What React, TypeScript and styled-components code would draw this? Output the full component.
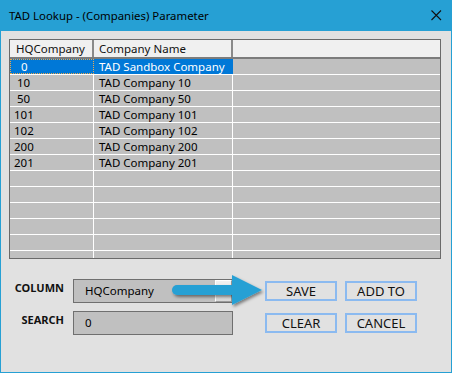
import React from "react";
import styled, { createGlobalStyle } from "styled-components";

const GlobalStyle = createGlobalStyle`
  body {
    margin: 0;
    background: #ffffff;
  }
`;

const Window = styled.div`
  width: 452px;
  height: 373px;
  box-sizing: border-box;
  background: #26a0d4;
  padding: 0 1px 1px 1px;
  display: flex;
  flex-direction: column;
  font-family: "Noto Sans", "DejaVu Sans", sans-serif;
  color: #000;
`;

const TitleBar = styled.div`
  height: 31px;
  flex: none;
  display: flex;
  align-items: center;
  justify-content: space-between;
  padding: 0 9px 0 8px;
  font-size: 11.4px;
`;

const Body = styled.div`
  flex: 1;
  background: #e1e1e1;
  padding: 8px 10px 0 0;
  display: flex;
  flex-direction: column;
`;

const Table = styled.div`
  margin-left: 8px;
  height: 220px;
  box-sizing: border-box;
  border: 1px solid #6a6a6a;
  background: #c0c0c0;
  overflow: hidden;
  font-size: 11.5px;
`;

const HeaderRow = styled.div`
  display: grid;
  grid-template-columns: 84px 139px 1fr;
  height: 19px;
  box-sizing: border-box;
  border-bottom: 2px solid #7c7c7c;
`;

const HeaderCell = styled.div<{ $indent: number }>`
  background: #f0f0f0;
  border-right: 2px solid #8a8a8a;
  padding-left: ${(p) => p.$indent}px;
  line-height: 17px;
  white-space: nowrap;
  color: #111;

  &:last-child {
    border-right: none;
  }
`;

const Row = styled.div`
  display: grid;
  grid-template-columns: 84px 139px 1fr;
  height: 16px;
  box-sizing: border-box;
  border-bottom: 1px solid #ffffff;
`;

const Cell = styled.div<{ $indent?: number; $selected?: boolean; $focus?: boolean }>`
  border-right: 1px solid ${(p) => (p.$selected ? "#0078d7" : "#ffffff")};
  background: ${(p) => (p.$selected ? "#0078d7" : "transparent")};
  color: ${(p) => (p.$selected ? "#ffffff" : "#000")};
  padding-left: ${(p) => p.$indent ?? 5}px;
  line-height: 15px;
  white-space: nowrap;
  overflow: hidden;
  outline: ${(p) => (p.$focus ? "1px dotted #f0a848" : "none")};
  outline-offset: -1px;

  &:last-child {
    border-right: none;
  }
`;

const Controls = styled.div`
  position: relative;
  margin-top: 20px;
  padding-left: 2px;
  display: flex;
  align-items: flex-start;
`;

const Fields = styled.div`
  display: grid;
  grid-template-columns: 61px 160px;
  grid-auto-rows: 24px;
  column-gap: 9px;
  row-gap: 8px;
`;

const Label = styled.div`
  align-self: start;
  text-align: right;
  font-weight: 700;
  font-size: 11px;
  line-height: 17px;
  color: #111;
`;

const Field = styled.div`
  display: flex;
  align-items: stretch;
  box-sizing: border-box;
  border: 1px solid #6f6f6f;
  background: #c0c0c0;
  font-size: 11.5px;
`;

const FieldText = styled.div`
  flex: 1;
  padding-left: 11px;
  line-height: 22px;
`;

const DropButton = styled.div`
  width: 17px;
  box-sizing: border-box;
  border: 1px solid #9a9a9a;
  border-top-color: #ffffff;
  border-left-color: #ffffff;
  background: linear-gradient(#f2f2f2, #d8d8d8);
`;

const Buttons = styled.div`
  margin-left: 32px;
  padding-top: 2px;
  display: grid;
  grid-template-columns: 72px 72px;
  grid-auto-rows: 20px;
  column-gap: 8px;
  row-gap: 12px;
`;

const Button = styled.button`
  box-sizing: border-box;
  border: 2px solid #8bbaf0;
  background: #e1e1e1;
  font-family: "Noto Sans", "DejaVu Sans", sans-serif;
  font-size: 13px;
  line-height: 16px;
  padding: 0;
  color: #111;
`;

const Pointer = styled.svg`
  position: absolute;
  left: 159px;
  top: -11px;
  width: 110px;
  height: 45px;
  overflow: visible;
`;

const rows = [
  { id: "0", indent: 11, name: "TAD Sandbox Company" },
  { id: "10", indent: 7, name: "TAD Company 10" },
  { id: "50", indent: 7, name: "TAD Company 50" },
  { id: "101", indent: 4, name: "TAD Company 101" },
  { id: "102", indent: 4, name: "TAD Company 102" },
  { id: "200", indent: 4, name: "TAD Company 200" },
  { id: "201", indent: 4, name: "TAD Company 201" },
];

const App: React.FunctionComponent = () => {
  const blanks = Array.from({ length: 6 }, (_, i) => i);

  return (
    <Window>
      <GlobalStyle />
      <TitleBar>
        <span>TAD Lookup - (Companies) Parameter</span>
        <svg width="11" height="11" viewBox="0 0 11 11">
          <path d="M0.5 0.5 L10 10 M10 0.5 L0.5 10" stroke="#111" strokeWidth="1.1" />
        </svg>
      </TitleBar>
      <Body>
        <Table>
          <HeaderRow>
            <HeaderCell $indent={6}>HQCompany</HeaderCell>
            <HeaderCell $indent={5}>Company Name</HeaderCell>
            <HeaderCell $indent={5} />
          </HeaderRow>
          {rows.map((row, i) => (
            <Row key={row.id}>
              <Cell $indent={row.indent} $selected={i === 0} $focus={i === 0}>
                {row.id}
              </Cell>
              <Cell $selected={i === 0}>{row.name}</Cell>
              <Cell />
            </Row>
          ))}
          {blanks.map((b) => (
            <Row key={"blank" + b}>
              <Cell />
              <Cell />
              <Cell />
            </Row>
          ))}
        </Table>
        <Controls>
          <Fields>
            <Label>COLUMN</Label>
            <Field>
              <FieldText>HQCompany</FieldText>
              <DropButton />
            </Field>
            <Label>SEARCH</Label>
            <Field>
              <FieldText>0</FieldText>
            </Field>
          </Fields>
          <Buttons>
            <Button>SAVE</Button>
            <Button>ADD TO</Button>
            <Button>CLEAR</Button>
            <Button>CANCEL</Button>
          </Buttons>
          <Pointer viewBox="0 0 110 45">
            <defs>
              <filter id="shade" x="-20%" y="-40%" width="140%" height="180%">
                <feDropShadow dx="1.5" dy="2" stdDeviation="1.5" floodColor="#000" floodOpacity="0.45" />
              </filter>
            </defs>
            <g filter="url(#shade)" fill="#26a0d4">
              <rect x="12" y="17" width="64" height="10" rx="5" />
              <polygon points="72,7 102,22 72,37" />
            </g>
          </Pointer>
        </Controls>
      </Body>
    </Window>
  );
};

export default App;
